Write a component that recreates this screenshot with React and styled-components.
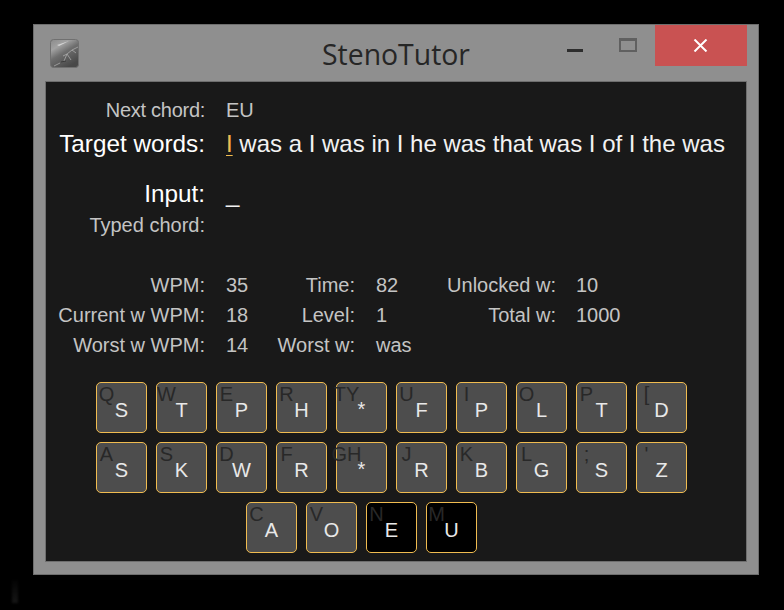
import styled, { createGlobalStyle } from "styled-components";

const GlobalStyle = createGlobalStyle`
  html, body {
    margin: 0;
    padding: 0;
    background: #000;
  }
  body {
    font-family: "Liberation Sans", Arial, sans-serif;
  }
`;

const rowsOfKeys = [
  {
    offset: 0,
    keys: [
      ["Q", "S"], ["W", "T"], ["E", "P"], ["R", "H"], ["TY", "*"],
      ["U", "F"], ["I", "P"], ["O", "L"], ["P", "T"], ["[", "D"],
    ],
  },
  {
    offset: 0,
    keys: [
      ["A", "S"], ["S", "K"], ["D", "W"], ["F", "R"], ["GH", "*"],
      ["J", "R"], ["K", "B"], ["L", "G"], [";", "S"], ["'", "Z"],
    ],
  },
  {
    offset: 150,
    keys: [["C", "A"], ["V", "O"], ["N", "E", true], ["M", "U", true]],
  },
];

const stats = [
  ["WPM:", "35", "Time:", "82", "Unlocked w:", "10"],
  ["Current w WPM:", "18", "Level:", "1", "Total w:", "1000"],
  ["Worst w WPM:", "14", "Worst w:", "was", "", ""],
];

const Logo = () => (
  <svg width="29" height="29" viewBox="0 0 29 29">
    <defs>
      <linearGradient id="logoFill" x1="0" y1="0" x2="0.6" y2="1">
        <stop offset="0" stopColor="#8a8a8a" />
        <stop offset="0.3" stopColor="#a2a2a2" />
        <stop offset="0.55" stopColor="#6e6e6e" />
        <stop offset="1" stopColor="#484848" />
      </linearGradient>
    </defs>
    <rect x="0.5" y="0.5" width="28" height="28" rx="3" fill="url(#logoFill)" stroke="#707070" />
    <path d="M7 6 L19 2 L9 7 Z" fill="#d4d4d4" />
    <path
      d="M28 8 L22 11 L17 15 L13 17 M17 15 L21 21 M22 11 L26 14 M17 15 L14 22 M4 27 L10 24"
      stroke="#b5b5b5"
      strokeWidth="0.7"
      fill="none"
    />
    <path d="M11 23 L16 22" stroke="#333" strokeWidth="0.8" />
  </svg>
);

const CloseIcon = () => (
  <svg width="15" height="13" viewBox="0 0 15 13">
    <path d="M1.5 0.5 L13.5 12.5 M13.5 0.5 L1.5 12.5" stroke="#fff" strokeWidth="2" />
  </svg>
);

const App = () => (
  <Page>
    <GlobalStyle />
    <Speck />
    <Window>
      <TitleBar>
        <LogoSlot>
          <Logo />
        </LogoSlot>
        <Title>StenoTutor</Title>
        <Controls>
          <MinimizeButton />
          <MaximizeButton />
          <CloseButton>
            <CloseIcon />
          </CloseButton>
        </Controls>
      </TitleBar>
      <Panel>
        <FormRow>
          <Label $track={-0.28}>Next chord:</Label>
          <Value>EU</Value>
        </FormRow>
        <FormRow>
          <BigLabel>Target words:</BigLabel>
          <BigValue>
            <Current>I</Current> was a I was in I he was that was I of I the was
          </BigValue>
        </FormRow>
        <FormRow $top={20}>
          <BigLabel>Input:</BigLabel>
          <BigValue>_</BigValue>
        </FormRow>
        <FormRow $top={1}>
          <Label>Typed chord:</Label>
          <Value />
        </FormRow>
        <StatsGrid>
          {stats.map((row) =>
            row.map((text, i) =>
              i % 2 === 0 ? (
                <Label key={row[0] + i}>{text}</Label>
              ) : (
                <Value key={row[0] + i}>{text}</Value>
              ),
            ),
          )}
        </StatsGrid>
        <Keyboard>
          {rowsOfKeys.map((row, rowIdx) => (
            <KeyRow key={rowIdx} $offset={row.offset}>
              {row.keys.map(([legend, chord, active]) => (
                <Key key={legend} $active={active}>
                  <Legend>{legend}</Legend>
                  <Chord $small={chord === "*"}>{chord}</Chord>
                </Key>
              ))}
            </KeyRow>
          ))}
        </Keyboard>
      </Panel>
    </Window>
  </Page>
);

export default App;

const Page = styled.div`
  position: relative;
  width: 784px;
  height: 610px;
  padding: 24px 0 0 33px;
  box-sizing: border-box;
  overflow: hidden;
  background: #000;
`;

const Speck = styled.div`
  position: absolute;
  left: 12px;
  top: 580px;
  width: 6px;
  height: 23px;
  background: linear-gradient(#030303, #161616);
  filter: blur(1px);
`;

const Window = styled.div`
  width: 726px;
  height: 551px;
  box-sizing: border-box;
  background: #8f8f8f;
  border: 1px solid #6e6e6e;
  padding: 0 11px 12px;
  display: flex;
  flex-direction: column;
`;

const TitleBar = styled.div`
  height: 56px;
  flex: none;
  display: grid;
  grid-template-columns: 1fr auto 1fr;
  align-items: start;
`;

const LogoSlot = styled.div`
  padding: 14px 0 0 5px;
  line-height: 0;
`;

const Title = styled.div`
  font-family: "Open Sans", "Noto Sans", sans-serif;
  font-size: 28.4px;
  line-height: 58px;
  color: #262626;
`;

const Controls = styled.div`
  display: flex;
  justify-content: flex-end;
  align-items: flex-start;
`;

const MinimizeButton = styled.div`
  width: 16px;
  height: 3px;
  margin-top: 24px;
  background: #2d2d2d;
`;

const MaximizeButton = styled.div`
  width: 18px;
  height: 14px;
  box-sizing: border-box;
  margin: 13px 18px 0 36px;
  border: 2px solid #606060;
  border-top-width: 3px;
`;

const CloseButton = styled.div`
  width: 92px;
  height: 41px;
  padding-right: 2px;
  box-sizing: border-box;
  background: #c95252;
  display: flex;
  align-items: center;
  justify-content: center;
`;

const Panel = styled.div`
  flex: 1;
  background: #191919;
  border: 1px solid #6e6e6e;
  padding-top: 13px;
`;

const FormRow = styled.div`
  display: grid;
  grid-template-columns: 159px 1fr;
  column-gap: 21px;
  height: 30px;
  align-items: center;
  margin-top: ${(p) => p.$top || 4}px;
  &:first-child {
    margin-top: 0;
  }
`;

const Label = styled.div`
  font-size: 20px;
  line-height: 30px;
  height: 30px;
  color: #c4c4c4;
  text-align: right;
  white-space: nowrap;
  letter-spacing: ${(p) => p.$track || 0}px;
`;

const Value = styled.div`
  font-size: 20px;
  line-height: 30px;
  height: 30px;
  color: #c4c4c4;
  white-space: nowrap;
`;

const BigLabel = styled(Label)`
  font-size: 24.3px;
  color: #fff;
`;

const BigValue = styled(Value)`
  font-size: 24px;
  color: #f2f2f2;
`;

const Current = styled.span`
  color: #f0bc50;
  text-decoration: underline;
  text-decoration-thickness: 1px;
  text-underline-offset: 3px;
`;

const StatsGrid = styled.div`
  display: grid;
  grid-template-columns: 159px 60px 90px 90px 111px 1fr;
  margin-top: 30px;
  & > div:nth-child(2n) {
    padding-left: 21px;
  }
  & > div:nth-child(6n) {
    padding-left: 20px;
  }
`;

const Keyboard = styled.div`
  margin-top: 22px;
  padding-left: 50px;
  display: flex;
  flex-direction: column;
  gap: 9px;
`;

const KeyRow = styled.div`
  display: flex;
  gap: 9px;
  margin-left: ${(p) => p.$offset}px;
`;

const Key = styled.div`
  position: relative;
  width: 51px;
  height: 51px;
  box-sizing: border-box;
  border: 1px solid #f0bc50;
  border-radius: 5px;
  background: ${(p) => (p.$active ? "#000" : "#4d4d4d")};
  display: flex;
  align-items: center;
  justify-content: center;
`;

const Legend = styled.span`
  position: absolute;
  left: -1px;
  top: 0;
  width: 21px;
  display: flex;
  justify-content: center;
  font-size: 20px;
  line-height: 20px;
  margin-top: 1px;
  color: #282828;
  white-space: nowrap;
`;

const Chord = styled.span`
  font-size: 20px;
  line-height: 20px;
  color: #e8e8e8;
  margin-top: ${(p) => (p.$small ? "2px" : "4px")};
`;
